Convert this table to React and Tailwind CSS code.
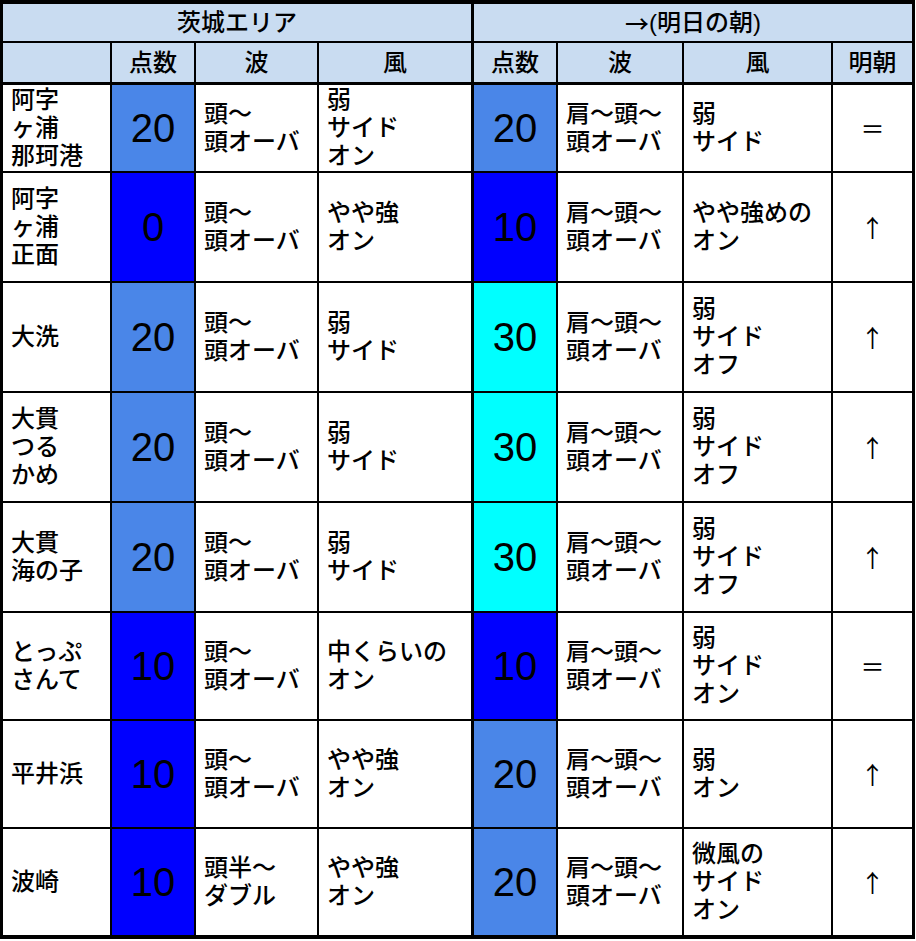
import React from "react";

const FONT = "font-['Liberation_Sans','Noto_Sans_CJK_JP',sans-serif]";
const CJK = "font-['Noto_Sans_CJK_JP',sans-serif]";

const SCORE_BG = {
  0: "bg-[#0000ff]",
  10: "bg-[#0000ff]",
  20: "bg-[#4a86e8]",
  30: "bg-[#00ffff]",
};

const ROW_H = ["h-[88px]", "h-[110px]", "h-[110px]", "h-[110px]", "h-[110px]", "h-[108px]", "h-[108px]", "h-[110px]"];

const rows = [
  { spot: ["阿字", "ヶ浦", "那珂港"], score: 20, wave: ["頭～", "頭オーバ"], wind: ["弱", "サイド", "オン"], score2: 20, wave2: ["肩～頭～", "頭オーバ"], wind2: ["弱", "サイド"], trend: "＝" },
  { spot: ["阿字", "ヶ浦", "正面"], score: 0, wave: ["頭～", "頭オーバ"], wind: ["やや強", "オン"], score2: 10, wave2: ["肩～頭～", "頭オーバ"], wind2: ["やや強めの", "オン"], trend: "↑" },
  { spot: ["大洗"], score: 20, wave: ["頭～", "頭オーバ"], wind: ["弱", "サイド"], score2: 30, wave2: ["肩～頭～", "頭オーバ"], wind2: ["弱", "サイド", "オフ"], trend: "↑" },
  { spot: ["大貫", "つる", "かめ"], score: 20, wave: ["頭～", "頭オーバ"], wind: ["弱", "サイド"], score2: 30, wave2: ["肩～頭～", "頭オーバ"], wind2: ["弱", "サイド", "オフ"], trend: "↑" },
  { spot: ["大貫", "海の子"], score: 20, wave: ["頭～", "頭オーバ"], wind: ["弱", "サイド"], score2: 30, wave2: ["肩～頭～", "頭オーバ"], wind2: ["弱", "サイド", "オフ"], trend: "↑" },
  { spot: ["とっぷ", "さんて"], score: 10, wave: ["頭～", "頭オーバ"], wind: ["中くらいの", "オン"], score2: 10, wave2: ["肩～頭～", "頭オーバ"], wind2: ["弱", "サイド", "オン"], trend: "＝" },
  { spot: ["平井浜"], score: 10, wave: ["頭～", "頭オーバ"], wind: ["やや強", "オン"], score2: 20, wave2: ["肩～頭～", "頭オーバ"], wind2: ["弱", "オン"], trend: "↑" },
  { spot: ["波崎"], score: 10, wave: ["頭半～", "ダブル"], wind: ["やや強", "オン"], score2: 20, wave2: ["肩～頭～", "頭オーバ"], wind2: ["微風の", "サイド", "オン"], trend: "↑" },
];

// every cell draws its own right + bottom line
const Lines = ({ lines, className = "" }) => (
  <div className={`flex flex-col justify-center pl-[8px] text-[24px] leading-[28px] font-medium whitespace-nowrap ${className}`}>
    {lines.map((l, i) => (
      <span key={i}>{l}</span>
    ))}
  </div>
);

export default function App() {
  return (
    <div className={`w-[916px] h-[941px] bg-white text-black ${FONT}`}>
      <div className="grid w-[915px] grid-cols-[109px_84px_123px_155px_84px_126px_149px_82px] border-t-4 border-l-[3px] border-black">
        {/* header row 1 */}
        <div className="col-span-4 h-[39px] flex items-center justify-center bg-[#c9dcf1] border-r-[3px] border-b-2 border-black text-[24px] font-medium">
          茨城エリア
        </div>
        <div className="col-span-4 h-[39px] flex items-center justify-center bg-[#c9dcf1] border-r-[3px] border-b-2 border-black text-[24px] font-medium">
          <span className={CJK}>→</span>(明日の朝)
        </div>

        {/* header row 2 */}
        {["", "点数", "波", "風", "点数", "波", "風", "明朝"].map((h, i) => (
          <div
            key={i}
            className={`h-[42px] flex items-center justify-center bg-[#c9dcf1] border-b-[3px] border-black text-[24px] font-medium ${
              i === 3 || i === 7 ? "border-r-[3px]" : "border-r-2"
            }`}
          >
            {h}
          </div>
        ))}

        {/* data rows */}
        {rows.map((r, i) => {
          const h = ROW_H[i];
          const last = i === rows.length - 1;
          const b = last ? "border-b-4" : "border-b-2";
          return (
            <React.Fragment key={i}>
              <Lines lines={r.spot} className={`${h} ${b} border-r-2 border-black`} />
              <div className={`${h} ${b} border-r-2 border-black ${SCORE_BG[r.score]} flex items-center justify-center text-[40px]`}>
                {r.score}
              </div>
              <Lines lines={r.wave} className={`${h} ${b} border-r-2 border-black`} />
              <Lines lines={r.wind} className={`${h} ${b} border-r-[3px] border-black`} />
              <div className={`${h} ${b} border-r-2 border-black ${SCORE_BG[r.score2]} flex items-center justify-center text-[40px]`}>
                {r.score2}
              </div>
              <Lines lines={r.wave2} className={`${h} ${b} border-r-2 border-black`} />
              <Lines lines={r.wind2} className={`${h} ${b} border-r-2 border-black`} />
              <div className={`${h} ${b} border-r-[3px] border-black flex items-center justify-center text-[24px] ${CJK}`}>
                {r.trend}
              </div>
            </React.Fragment>
          );
        })}
      </div>
    </div>
  );
}
